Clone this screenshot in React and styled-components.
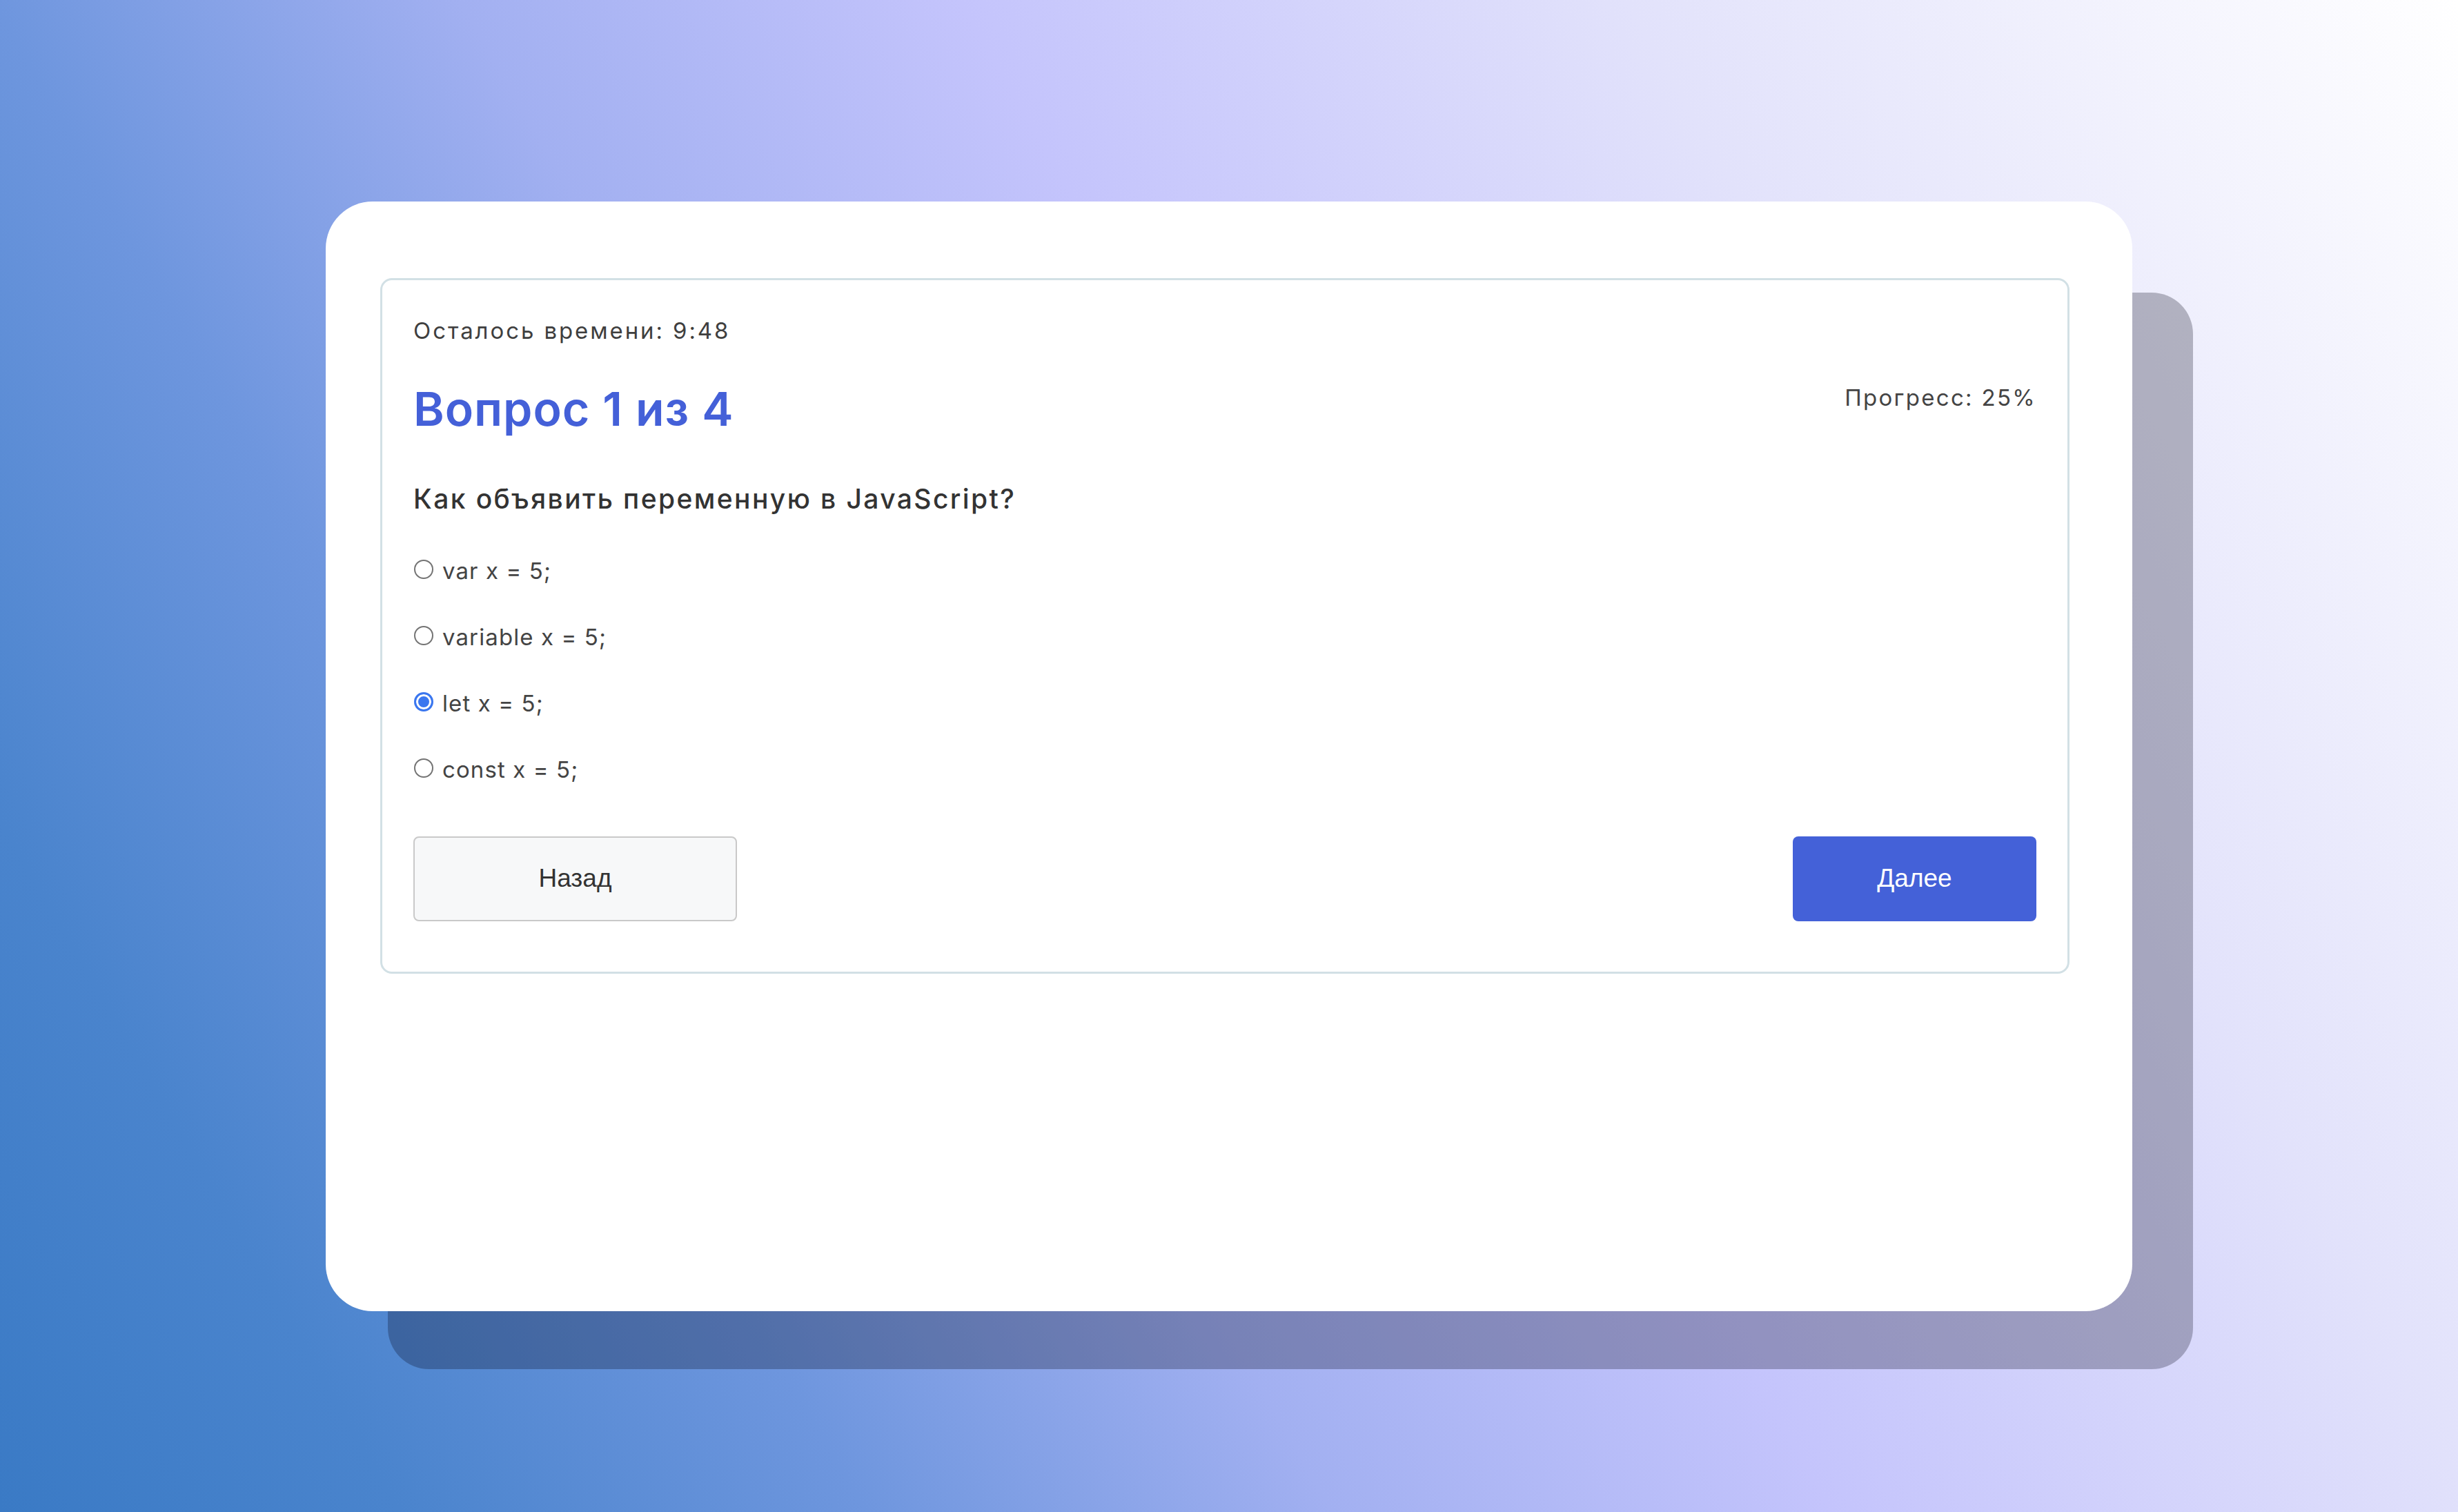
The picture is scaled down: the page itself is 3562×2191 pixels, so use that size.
import React, { useState } from "react";
import styled, { createGlobalStyle } from "styled-components";

const GlobalStyle = createGlobalStyle`
  html,
  body {
    margin: 0;
    padding: 0;
  }

  body {
    font-family: Inter, "Noto Sans", "DejaVu Sans", sans-serif;
    color: #444;
  }
`;

const Page = styled.main`
  position: relative;
  z-index: 0;
  min-height: 100vh;
  display: flex;
  align-items: center;
  justify-content: center;
  background: linear-gradient(
    60deg,
    #3a7ac5 0%,
    #4a84cd 12%,
    #6e96de 26%,
    #a2b0f1 40%,
    #c4c4fc 55%,
    #e2e2fb 75%,
    #ffffff 100%
  );
`;

const Card = styled.section`
  position: relative;
  box-sizing: border-box;
  width: 2618px;
  height: 1608px;
  padding: 111px 91px 0 79px;
  background: #fff;
  border-radius: 68px;

  /* flat offset slab behind the card */
  &::before {
    content: "";
    position: absolute;
    left: 90px;
    right: -88px;
    top: 132px;
    bottom: -84px;
    border-radius: 60px;
    background: rgba(0, 0, 20, 0.26);
    z-index: -1;
  }
`;

const Quiz = styled.div`
  box-sizing: border-box;
  border: 3px solid #d2e0e5;
  border-radius: 17px;
  padding: 53px 45px 73px;
`;

const Timer = styled.div`
  font-size: 33px;
  line-height: 40px;
  letter-spacing: 2.9px;
  color: #3f3f3f;
`;

const Header = styled.div`
  display: flex;
  justify-content: space-between;
  align-items: flex-start;
  margin-top: 57px;
`;

const Title = styled.h2`
  margin: -5px 0 0;
  font-size: 68px;
  line-height: 82px;
  font-weight: 600;
  letter-spacing: 0.9px;
  color: #4460d8;
`;

const Progress = styled.div`
  font-size: 33px;
  line-height: 40px;
  letter-spacing: 2.3px;
  color: #444;
`;

const Question = styled.p`
  margin: 66px 0 0;
  font-size: 39px;
  line-height: 47px;
  font-weight: 500;
  letter-spacing: 2.4px;
  color: #333;
`;

const Options = styled.div`
  display: flex;
  flex-direction: column;
  gap: 56px;
  margin-top: 61px;
`;

const Option = styled.label`
  display: flex;
  align-items: center;
  gap: 13px;
  font-size: 33px;
  line-height: 40px;
  letter-spacing: 1.1px;
  color: #444;
  cursor: pointer;
`;

const Radio = styled.input`
  appearance: none;
  box-sizing: border-box;
  width: 28px;
  height: 28px;
  margin: 0 0 4px 1px;
  border: 2px solid #747474;
  border-radius: 50%;
  background: #fff;
  cursor: pointer;

  &:checked {
    border: 3px solid #3b77ef;
    background: #3b77ef;
    box-shadow: inset 0 0 0 3px #fff;
  }
`;

const Nav = styled.div`
  display: flex;
  justify-content: space-between;
  margin-top: 77px;
`;

const Button = styled.button`
  box-sizing: border-box;
  height: 123px;
  width: ${(p) => (p.$primary ? "353px" : "469px")};
  border-radius: 8px;
  border: ${(p) => (p.$primary ? "none" : "2px solid #c9c9c9")};
  background: ${(p) => (p.$primary ? "#4461d8" : "#f7f8f9")};
  color: ${(p) => (p.$primary ? "#fff" : "#333")};
  font-family: "Liberation Sans", Arial, sans-serif;
  font-size: 37px;
  cursor: pointer;
`;

const answers = ["var x = 5;", "variable x = 5;", "let x = 5;", "const x = 5;"];

export default function App() {
  const [picked, setPicked] = useState(2);

  return (
    <>
      <GlobalStyle />
      <Page>
        <Card>
          <Quiz>
            <Timer>Осталось времени: 9:48</Timer>
            <Header>
              <Title>Вопрос 1 из 4</Title>
              <Progress>Прогресс: 25%</Progress>
            </Header>
            <Question>Как объявить переменную в JavaScript?</Question>
            <Options>
              {answers.map((a, i) => (
                <Option key={a}>
                  <Radio
                    type="radio"
                    name="answer"
                    checked={picked === i}
                    onChange={() => setPicked(i)}
                  />
                  {a}
                </Option>
              ))}
            </Options>
            <Nav>
              <Button>Назад</Button>
              <Button $primary>Далее</Button>
            </Nav>
          </Quiz>
        </Card>
      </Page>
    </>
  );
}
